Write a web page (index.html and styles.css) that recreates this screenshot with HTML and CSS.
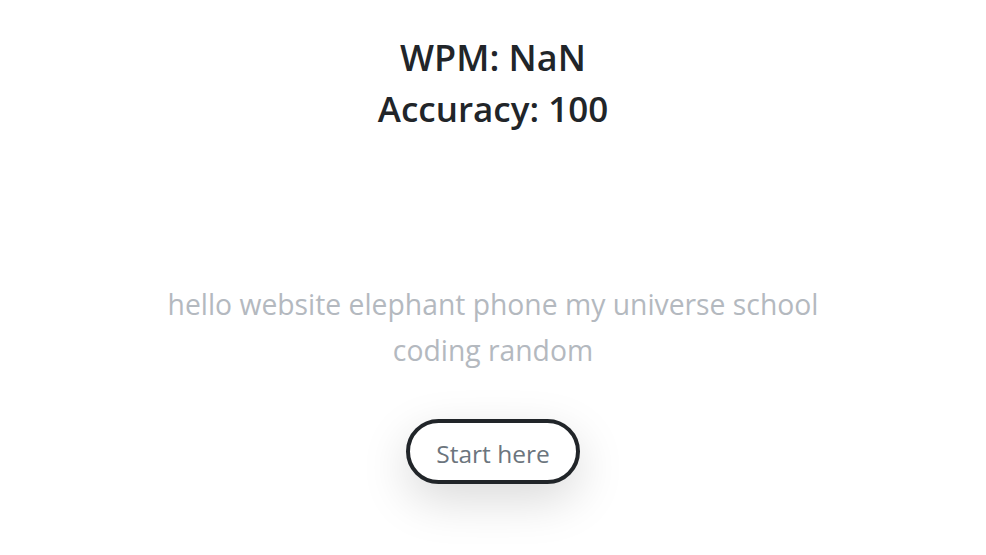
FILE: index.html
```html
<!DOCTYPE html>
<html>
<head>
<meta charset="utf-8">
<link rel="stylesheet" href="styles.css">
</head>
<body>
<main class="app">
  <div class="stats">
    <div class="stat">WPM: NaN</div>
    <div class="stat">Accuracy: 100</div>
  </div>
  <p class="words">hello website elephant phone my universe school coding random</p>
  <button class="start">Start here</button>
</main>
</body>
</html>
```
FILE: styles.css
```css
html, body {
  margin: 0;
  padding: 0;
  background: #fff;
}
.app {
  display: flex;
  flex-direction: column;
  align-items: center;
  padding-bottom: 60px;
  font-family: "Open Sans", "Noto Sans", sans-serif;
  color: #212529;
}
.stats {
  margin-top: 32px;
  text-align: center;
}
.stat {
  font-size: 36px;
  font-weight: 600;
  line-height: 51px;
}
.stat + .stat {
  font-size: 35px;
}
.words {
  margin: 147px 0 0;
  width: 700px;
  text-align: center;
  font-size: 28.3px;
  line-height: 46px;
  color: #b4b9bf;
}
.start {
  margin-top: 46px;
  width: 174px;
  height: 65px;
  padding: 3px 0 0;
  border: 4px solid #212529;
  border-radius: 33px;
  background: #fff;
  font-family: "Open Sans", "Noto Sans", sans-serif;
  font-size: 24.5px;
  color: #6c757d;
  box-shadow: 0 16px 48px rgba(0, 0, 0, 0.15);
  cursor: pointer;
}
```
